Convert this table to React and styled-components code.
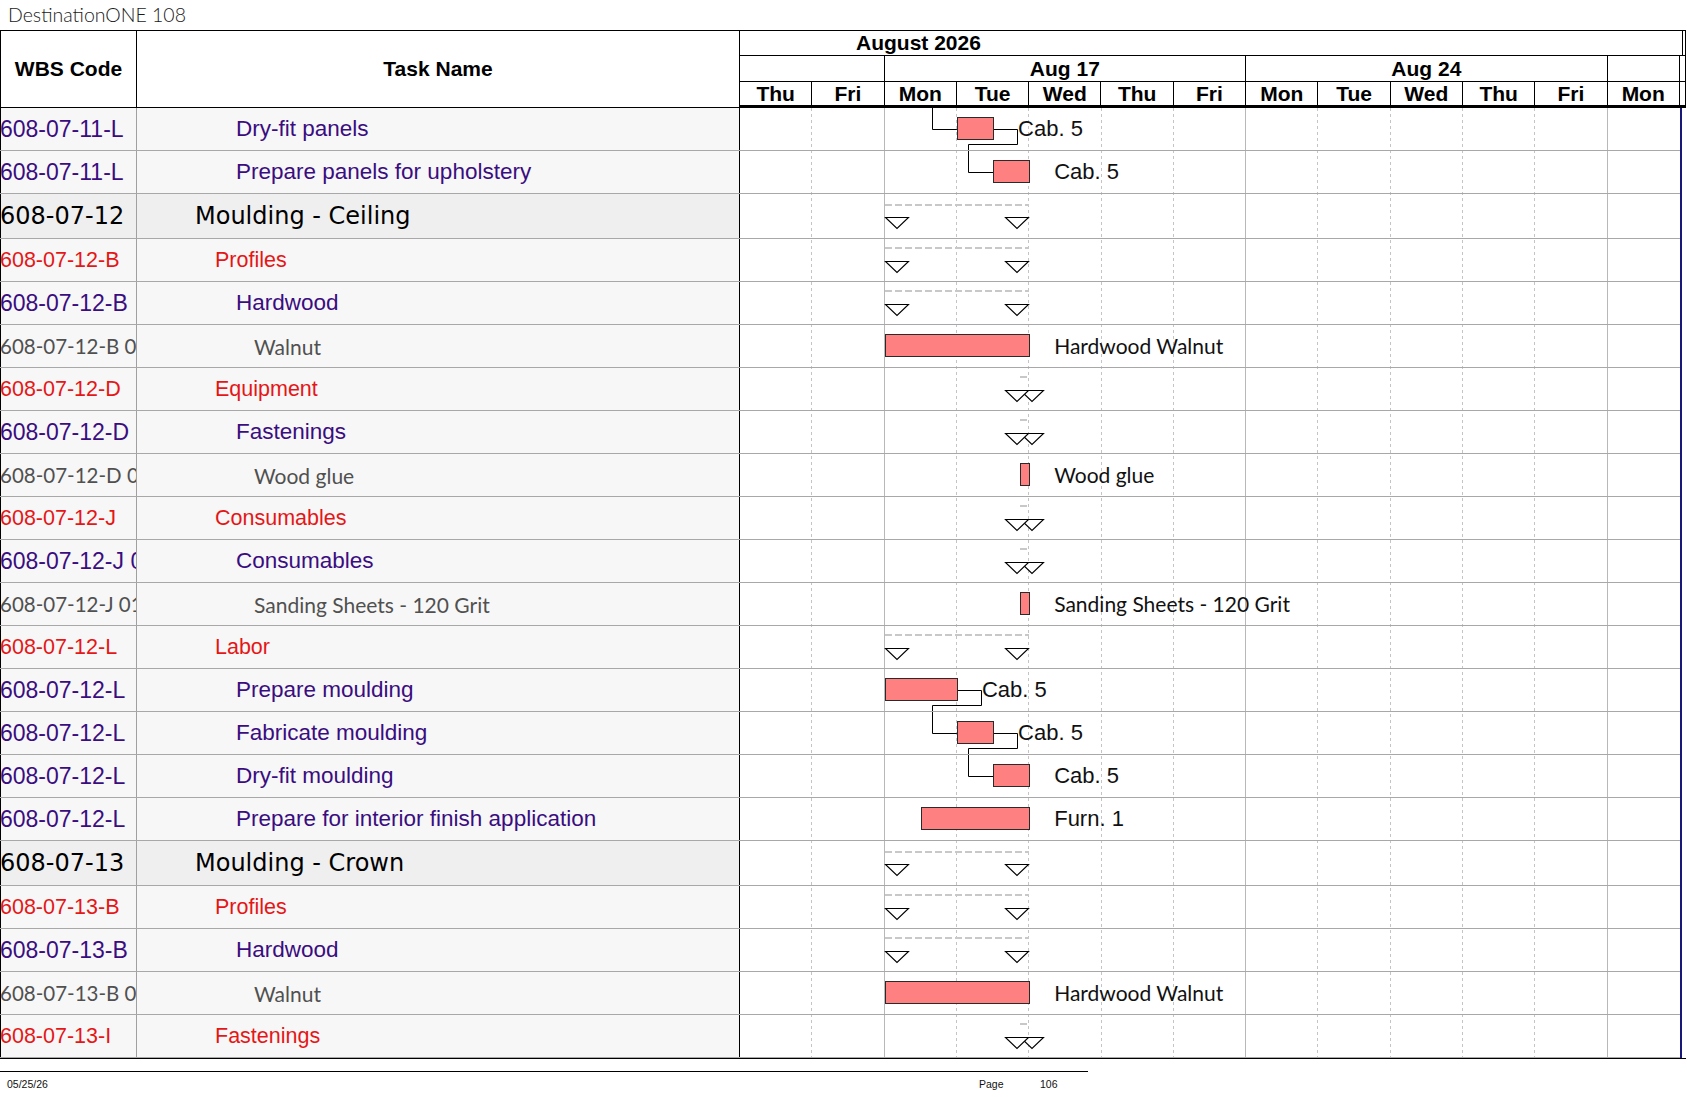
import React from 'react';
import styled, { createGlobalStyle } from 'styled-components';

const DAY_W = 72.3;
const ARIAL = '"Liberation Sans", Arial, Helvetica, sans-serif';
const CALIBRI = 'Lato, "Open Sans", sans-serif';
const TAHOMA = '"DejaVu Sans", Verdana, sans-serif';

const DAYS = ['Thu', 'Fri', 'Mon', 'Tue', 'Wed', 'Thu', 'Fri', 'Mon', 'Tue', 'Wed', 'Thu', 'Fri', 'Mon'];
const WEEK_STARTS = [2, 7, 12];
const WEEKS = [
  { span: 2, label: '' },
  { span: 5, label: 'Aug 17' },
  { span: 5, label: 'Aug 24' },
  { span: 1, label: '' },
];

// стили по уровню WBS
const LEVELS = {
  1: { color: '#000', font: TAHOMA, wbsSize: 24, size: 24, indent: 58 },
  2: { color: '#e51616', font: ARIAL, wbsSize: 21.5, size: 21.5, indent: 78 },
  3: { color: '#3a0d80', font: ARIAL, wbsSize: 23, size: 22.5, indent: 99 },
  4: { color: '#505050', font: CALIBRI, wbsSize: 20.5, size: 21, indent: 117 },
};

const ROWS = [
  { wbs: '608-07-11-L', name: 'Dry-fit panels', level: 3, bar: [3, 3.5], label: 'Cab. 5' },
  { wbs: '608-07-11-L', name: 'Prepare panels for upholstery', level: 3, bar: [3.5, 4], label: 'Cab. 5' },
  { wbs: '608-07-12', name: 'Moulding - Ceiling', level: 1, summary: [2, 4] },
  { wbs: '608-07-12-B', name: 'Profiles', level: 2, summary: [2, 4] },
  { wbs: '608-07-12-B', name: 'Hardwood', level: 3, summary: [2, 4] },
  { wbs: '608-07-12-B 01', name: 'Walnut', level: 4, bar: [2, 4], label: 'Hardwood Walnut', soft: true },
  { wbs: '608-07-12-D', name: 'Equipment', level: 2, summary: [3.875, 4] },
  { wbs: '608-07-12-D 01', name: 'Fastenings', level: 3, summary: [3.875, 4] },
  { wbs: '608-07-12-D 0101', name: 'Wood glue', level: 4, bar: [3.875, 4], label: 'Wood glue', soft: true },
  { wbs: '608-07-12-J', name: 'Consumables', level: 2, summary: [3.875, 4] },
  { wbs: '608-07-12-J 01', name: 'Consumables', level: 3, summary: [3.875, 4] },
  { wbs: '608-07-12-J 0101', name: 'Sanding Sheets - 120 Grit', level: 4, bar: [3.875, 4], label: 'Sanding Sheets - 120 Grit', soft: true },
  { wbs: '608-07-12-L', name: 'Labor', level: 2, summary: [2, 4] },
  { wbs: '608-07-12-L', name: 'Prepare moulding', level: 3, bar: [2, 3], label: 'Cab. 5' },
  { wbs: '608-07-12-L', name: 'Fabricate moulding', level: 3, bar: [3, 3.5], label: 'Cab. 5' },
  { wbs: '608-07-12-L', name: 'Dry-fit moulding', level: 3, bar: [3.5, 4], label: 'Cab. 5' },
  { wbs: '608-07-12-L', name: 'Prepare for interior finish application', level: 3, bar: [2.5, 4], label: 'Furn. 1' },
  { wbs: '608-07-13', name: 'Moulding - Crown', level: 1, summary: [2, 4] },
  { wbs: '608-07-13-B', name: 'Profiles', level: 2, summary: [2, 4] },
  { wbs: '608-07-13-B', name: 'Hardwood', level: 3, summary: [2, 4] },
  { wbs: '608-07-13-B 01', name: 'Walnut', level: 4, bar: [2, 4], label: 'Hardwood Walnut', soft: true },
  { wbs: '608-07-13-I', name: 'Fastenings', level: 2, summary: [3.875, 4] },
];

// связи между задачами (индексы строк)
const LINKS = [[0, 1], [13, 14], [14, 15]];
const INCOMING = [0];

const rowHeight = (row) => (row.level === 1 ? 45 : 43);
const rowTops = ROWS.reduce((acc, row, i) => {
  acc.push(i === 0 ? 0 : acc[i - 1] + rowHeight(ROWS[i - 1]));
  return acc;
}, []);
const BODY_H = rowTops[rowTops.length - 1] + rowHeight(ROWS[ROWS.length - 1]);

const BAR_TOP = 9;
const BAR_H = 23;
const px = (v) => Math.round(v) + 0.5;

const GlobalStyle = createGlobalStyle`
  * { box-sizing: border-box; }
  html, body { margin: 0; padding: 0; background: #fff; }
  body { font-family: ${ARIAL}; color: #000; }
`;

const Page = styled.div`
  width: 1687px;
  height: 1097px;
  overflow: hidden;
  background: #fff;
`;

const Title = styled.div`
  height: 30px;
  padding-left: 8px;
  font-family: ${CALIBRI};
  font-weight: 300;
  font-size: 19.5px;
  line-height: 30px;
  color: #1a1a1a;
`;

const Sheet = styled.div`
  width: 1686px;
  border-top: 1px solid #000;
`;

const HeaderRow = styled.div`
  display: flex;
  height: 77px;
`;

const HeadCell = styled.div`
  width: ${(p) => p.$w}px;
  flex-shrink: 0;
  border-left: ${(p) => (p.$first ? '1px solid #000' : 'none')};
  border-right: 1px solid #000;
  border-bottom: 1px solid #000;
  display: flex;
  align-items: center;
  justify-content: center;
  font-weight: 700;
  font-size: 21px;
`;

const ChartHead = styled.div`
  width: 946px;
  flex-shrink: 0;
  border-right: 1px solid #000;
  display: flex;
  flex-direction: column;
`;

const MonthRow = styled.div`
  height: 25px;
  border-bottom: 1px solid #000;
  display: flex;
`;

const MonthCell = styled.div`
  width: 943px;
  border-right: 1px solid #000;
  padding-left: 116px;
  font-weight: 700;
  font-size: 21px;
  line-height: 24px;
`;

const TierRow = styled.div`
  display: flex;
  height: ${(p) => p.$h}px;
  border-bottom: ${(p) => p.$b}px solid #000;
`;

const TierCell = styled.div`
  width: ${(p) => p.$span * DAY_W}px;
  flex-shrink: 0;
  border-right: 1px solid #000;
  display: flex;
  align-items: center;
  justify-content: center;
  font-weight: 700;
  font-size: 21px;
  line-height: 1;
`;

const Body = styled.div`
  display: flex;
  border-bottom: 1px solid #000;
`;

const LeftTable = styled.div`
  width: 740px;
  flex-shrink: 0;
  display: flex;
  flex-direction: column;
`;

const TableRow = styled.div`
  display: flex;
  height: ${(p) => p.$h}px;
  border-bottom: 1px solid #a8a8a8;
  background: ${(p) => (p.$big ? '#efefef' : '#f7f7f7')};
`;

const WbsCell = styled.div`
  width: 137px;
  flex-shrink: 0;
  border-left: 1px solid #000;
  border-right: 1px solid #a0a0a0;
  overflow: hidden;
  white-space: nowrap;
  display: flex;
  align-items: center;
  text-indent: -1px;
  color: ${(p) => p.$lv.color};
  font-family: ${(p) => p.$lv.font};
  font-size: ${(p) => p.$lv.wbsSize}px;
`;

const TaskCell = styled.div`
  width: 603px;
  flex-shrink: 0;
  border-right: 1px solid #000;
  overflow: hidden;
  white-space: nowrap;
  display: flex;
  align-items: center;
  padding-left: ${(p) => p.$lv.indent}px;
  color: ${(p) => p.$lv.color};
  font-family: ${(p) => p.$lv.font};
  font-size: ${(p) => p.$lv.size}px;
`;

const ChartBody = styled.div`
  position: relative;
  width: 942px;
  flex-shrink: 0;
  border-right: 2px solid #17177a;
  background: #fff;
`;

const GridLayer = styled.svg`
  position: absolute;
  top: 0;
  left: 0;
  z-index: 0;
  overflow: visible;
`;

const ChartRows = styled.div`
  position: relative;
  z-index: 1;
  display: flex;
  flex-direction: column;
`;

const ChartRow = styled.div`
  position: relative;
  height: ${(p) => p.$h}px;
  border-bottom: 1px solid #a8a8a8;
`;

const Bar = styled.div`
  position: absolute;
  top: ${BAR_TOP}px;
  height: ${BAR_H}px;
  background: #ff8080;
  border: 1px solid #2a2a2a;
`;

const BarLabel = styled.div`
  position: absolute;
  top: ${BAR_TOP}px;
  height: ${BAR_H}px;
  line-height: ${BAR_H}px;
  white-space: nowrap;
  color: #111;
  font-family: ${(p) => (p.$soft ? CALIBRI : ARIAL)};
  font-size: ${(p) => (p.$soft ? 21 : 22)}px;
`;

const SumDash = styled.div`
  position: absolute;
  top: ${(p) => p.$top}px;
  height: 2px;
  background: repeating-linear-gradient(90deg, #c8c8c8 0 7px, transparent 7px 10px);
`;

const Tri = styled.svg`
  position: absolute;
  top: ${(p) => p.$top}px;
  width: 24px;
  height: 12px;
  overflow: visible;
`;

const Footer = styled.div`
  margin-top: 12px;
  width: 1088px;
  border-top: 1.5px solid #000;
  display: grid;
  grid-template-columns: 979px 61px auto;
  padding-top: 6px;
  font-size: 10.5px;
  line-height: 13px;
  color: #111;
`;

const FooterDate = styled.span`
  padding-left: 7px;
`;

function Triangle({ left, top }) {
  return (
    <Tri $top={top} style={{ left: Math.round(left) }} viewBox="0 0 24 12">
      <polygon points="0.5,0.5 23.5,0.5 12,11.5" fill="#fff" stroke="#000" strokeWidth="1.1" />
    </Tri>
  );
}

function GanttCell({ row }) {
  const big = row.level === 1;
  if (row.bar) {
    const [s, e] = row.bar;
    return (
      <>
        <Bar style={{ left: s * DAY_W, width: (e - s) * DAY_W + 1 }} />
        <BarLabel $soft={row.soft} style={{ left: e * DAY_W + 25 }}>{row.label}</BarLabel>
      </>
    );
  }
  if (row.summary) {
    const [s, e] = row.summary;
    const x0 = s * DAY_W;
    const x1 = e * DAY_W;
    return (
      <>
        <SumDash $top={big ? 10 : 8} style={{ left: x0, width: x1 - x0 }} />
        <Triangle left={x0} top={big ? 23 : 22} />
        <Triangle left={x1 - 24} top={big ? 23 : 22} />
      </>
    );
  }
  return null;
}

function barGeom(i) {
  const [s, e] = ROWS[i].bar;
  const top = rowTops[i];
  return { x0: s * DAY_W, x1: e * DAY_W, cy: top + BAR_TOP + BAR_H / 2, bottom: top + BAR_TOP + BAR_H };
}

function Grid() {
  const lines = [];
  for (let i = 1; i < DAYS.length; i++) {
    const x = px(i * DAY_W - 1);
    const solid = WEEK_STARTS.includes(i);
    lines.push(
      <line
        key={i}
        x1={x}
        x2={x}
        y1={0}
        y2={BODY_H}
        stroke={solid ? '#b8b8b8' : '#c4c4c4'}
        strokeDasharray={solid ? undefined : '3 3'}
      />
    );
  }
  const links = LINKS.map(([a, b]) => {
    const A = barGeom(a);
    const B = barGeom(b);
    const ex = px(A.x1 + 24);
    const drop = px(A.bottom + 4);
    const sx = px(B.x0 - 25);
    const d = `M${A.x1} ${px(A.cy)} H${ex} V${drop} H${sx} V${px(B.cy)} H${B.x0}`;
    return <path key={`${a}-${b}`} d={d} fill="none" stroke="#000" strokeWidth="1" />;
  });
  const incoming = INCOMING.map((b) => {
    const B = barGeom(b);
    const sx = px(B.x0 - 25);
    return <path key={`in-${b}`} d={`M${sx} 0 V${px(B.cy)} H${B.x0}`} fill="none" stroke="#000" strokeWidth="1" />;
  });
  return (
    <GridLayer width={940} height={BODY_H}>
      {lines}
      {links}
      {incoming}
    </GridLayer>
  );
}

export default function App() {
  return (
    <Page>
      <GlobalStyle />
      <Title>DestinationONE 108</Title>
      <Sheet>
        <HeaderRow>
          <HeadCell $w={137} $first>WBS Code</HeadCell>
          <HeadCell $w={603}>Task Name</HeadCell>
          <ChartHead>
            <MonthRow>
              <MonthCell>August 2026</MonthCell>
            </MonthRow>
            <TierRow $h={26} $b={1}>
              {WEEKS.map((w, i) => (
                <TierCell key={i} $span={w.span}>{w.label}</TierCell>
              ))}
            </TierRow>
            <TierRow $h={26} $b={3}>
              {DAYS.map((d, i) => (
                <TierCell key={i} $span={1}>{d}</TierCell>
              ))}
            </TierRow>
          </ChartHead>
        </HeaderRow>

        <Body>
          <LeftTable>
            {ROWS.map((row, i) => {
              const lv = LEVELS[row.level];
              return (
                <TableRow key={i} $h={rowHeight(row)} $big={row.level === 1}>
                  <WbsCell $lv={lv}>{row.wbs}</WbsCell>
                  <TaskCell $lv={lv}>{row.name}</TaskCell>
                </TableRow>
              );
            })}
          </LeftTable>
          <ChartBody>
            <Grid />
            <ChartRows>
              {ROWS.map((row, i) => (
                <ChartRow key={i} $h={rowHeight(row)}>
                  <GanttCell row={row} />
                </ChartRow>
              ))}
            </ChartRows>
          </ChartBody>
        </Body>
      </Sheet>

      <Footer>
        <FooterDate>05/25/26</FooterDate>
        <span>Page</span>
        <span>106</span>
      </Footer>
    </Page>
  );
}
